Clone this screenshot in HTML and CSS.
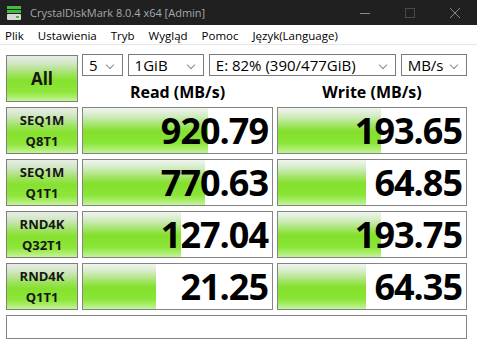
FILE: index.html
```html
<!DOCTYPE html>
<html lang="pl">
<head>
<meta charset="utf-8">
<title>CrystalDiskMark 8.0.4 x64 [Admin]</title>
<link rel="stylesheet" href="styles.css">
</head>
<body>
<div class="window">
  <div class="titlebar">
    <svg class="app-icon" width="16" height="16" viewBox="0 0 16 16">
      <rect x="1" y="1" width="14" height="3" fill="#3fbf3f"/>
      <rect x="1" y="5" width="14" height="3" fill="#3fbf3f"/>
      <rect x="1" y="9" width="14" height="6" rx="1" fill="#d8d8d8"/>
      <rect x="10" y="11" width="3" height="2" fill="#3fbf3f"/>
    </svg>
    <span class="title">CrystalDiskMark 8.0.4 x64 [Admin]</span>
    <div class="winbtns">
      <svg width="10" height="10" viewBox="0 0 10 10"><line x1="0" y1="5.5" x2="10" y2="5.5" stroke="#8a8a8a" stroke-width="1"/></svg>
      <svg width="10" height="10" viewBox="0 0 10 10"><rect x="0.5" y="0.5" width="9" height="9" fill="none" stroke="#4a4a4a" stroke-width="1"/></svg>
      <svg width="10" height="10" viewBox="0 0 10 10"><path d="M0 0 L10 10 M10 0 L0 10" stroke="#8a8a8a" stroke-width="1"/></svg>
    </div>
  </div>
  <div class="menubar">
    <span>Plik</span><span>Ustawienia</span><span>Tryb</span><span>Wygląd</span><span>Pomoc</span><span>Język(Language)</span>
  </div>
  <div class="main">
    <div class="btn all">All</div>
    <div class="head">
      <div class="selects">
        <div class="sel s-count">5</div>
        <div class="sel s-size">1GiB</div>
        <div class="sel s-drive">E: 82% (390/477GiB)</div>
        <div class="sel s-unit">MB/s</div>
      </div>
      <div class="colheads">
        <div class="colhead">Read (MB/s)</div>
        <div class="colhead">Write (MB/s)</div>
      </div>
    </div>

    <div class="btn">SEQ1M<br>Q8T1</div>
    <div class="bar"><div class="fill" style="width:66.07%"></div><span class="val">920.79</span></div>
    <div class="bar"><div class="fill" style="width:54.78%"></div><span class="val">193.65</span></div>

    <div class="btn">SEQ1M<br>Q1T1</div>
    <div class="bar"><div class="fill" style="width:64.78%"></div><span class="val">770.63</span></div>
    <div class="bar"><div class="fill" style="width:46.86%"></div><span class="val">64.85</span></div>

    <div class="btn">RND4K<br>Q32T1</div>
    <div class="bar"><div class="fill" style="width:51.73%"></div><span class="val">127.04</span></div>
    <div class="bar"><div class="fill" style="width:54.79%"></div><span class="val">193.75</span></div>

    <div class="btn">RND4K<br>Q1T1</div>
    <div class="bar"><div class="fill" style="width:38.79%"></div><span class="val">21.25</span></div>
    <div class="bar"><div class="fill" style="width:46.81%"></div><span class="val">64.35</span></div>

    <div class="status"></div>
  </div>
</div>
</body>
</html>
```

FILE: styles.css
```css
* { box-sizing: border-box; }
html, body { margin: 0; padding: 0; background: #fff; }
body { font-family: "Open Sans", "Noto Sans", sans-serif; width: 477px; height: 341px; overflow: hidden; }

.titlebar {
  height: 25px;
  background: #202020;
  display: flex;
  align-items: center;
  padding-left: 6px;
}
.app-icon { flex: none; }
.title { color: #a8a8a8; font-size: 11px; margin-left: 8px; }
.winbtns {
  margin-left: auto;
  display: flex;
  align-items: center;
  gap: 35px;
  padding-right: 17px;
}
.winbtns svg { display: block; }

.menubar {
  height: 20px;
  display: flex;
  align-items: center;
  padding: 2px 0 0 5px;
  gap: 14px;
  font-size: 11.5px;
  color: #000;
  border-bottom: 1px solid #e6e6e6;
}

.main {
  display: grid;
  grid-template-columns: 72px 191px 190px;
  grid-template-rows: 47px 47px 47px 47px 47px 24px;
  column-gap: 4px;
  row-gap: 5px;
  padding: 10px 0 0 6px;
}

.btn {
  border: 1px solid #7f7f7f;
  background: linear-gradient(to bottom, #e8ede6 0%, #cfe6c0 18%, #9fe260 40%, #86e22e 55%, #8ee63a 80%, #c4f398 100%);
  display: flex;
  align-items: center;
  justify-content: center;
  text-align: center;
  font-weight: 700;
  font-size: 13px;
  line-height: 21px;
  color: #161616;
}
.btn.all { font-size: 17px; }

.head {
  grid-column: 2 / 4;
  display: flex;
  flex-direction: column;
}
.selects { display: flex; gap: 5px; height: 24px; margin-top: -1px; }
.sel {
  border: 1px solid #7a7a7a;
  background: #fff;
  font-size: 15px;
  color: #000;
  display: flex;
  align-items: center;
  padding-left: 6px;
  position: relative;
}
.sel::after {
  content: "";
  position: absolute;
  right: 9px;
  top: 7px;
  width: 5px;
  height: 5px;
  border-right: 1px solid #8a8a8a;
  border-bottom: 1px solid #8a8a8a;
  transform: rotate(45deg);
}
.s-count { width: 41px; }
.s-size { width: 77px; }
.s-drive { width: 189px; }
.s-unit { width: 67px; }

.colheads { display: flex; flex: 1; align-items: center; gap: 4px; padding-top: 5px; }
.colhead { text-align: center; font-weight: 700; font-size: 16px; color: #000; }
.colhead:first-child { width: 191px; }
.colhead:last-child { width: 190px; }

.bar {
  border: 1px solid #858585;
  background: #fff;
  position: relative;
  display: flex;
  align-items: center;
  justify-content: flex-end;
}
.fill {
  position: absolute;
  left: 0; top: 0; bottom: 0;
  background: linear-gradient(to bottom, #f1f4f0 0%, #d2ecc2 18%, #a2e466 38%, #84e02c 52%, #8ae636 78%, #c2f39a 100%);
}
.val {
  position: relative;
  font-weight: 700;
  font-size: 36px;
  line-height: 1;
  color: #000;
  padding-right: 4px;
  letter-spacing: -1px;
}

.status {
  grid-column: 1 / 4;
  border: 1px solid #858585;
  background: #fff;
}
```
